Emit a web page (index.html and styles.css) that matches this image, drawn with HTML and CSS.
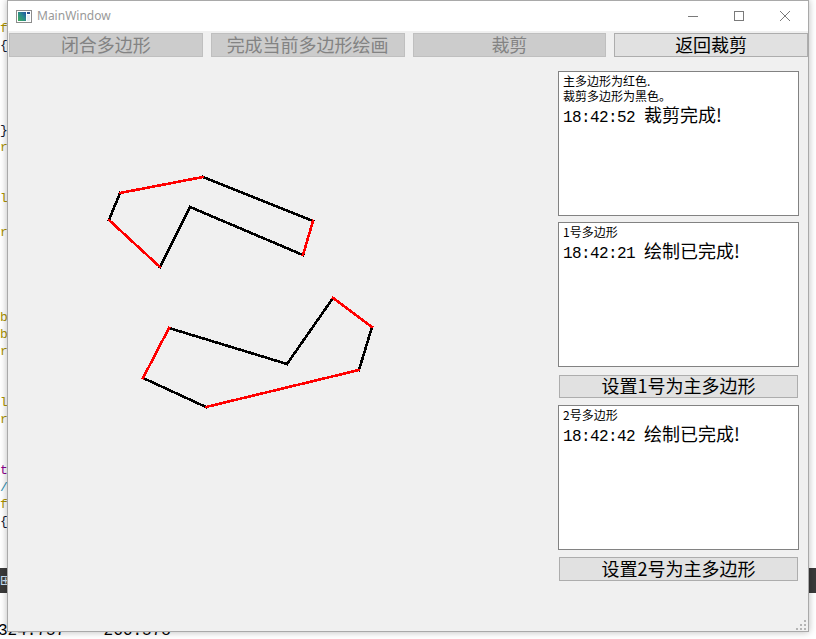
FILE: index.html
```html
<!DOCTYPE html>
<html>
<head>
<meta charset="utf-8">
<title>MainWindow</title>
<link rel="stylesheet" href="styles.css">
</head>
<body>
<div class="desktop">
  <div class="editor">
    <div class="ln kw">f</div>
    <div class="ln pn">{</div>
    <div class="ln"></div>
    <div class="ln"></div>
    <div class="ln"></div>
    <div class="ln"></div>
    <div class="ln pn">}</div>
    <div class="ln kw">r</div>
    <div class="ln"></div>
    <div class="ln"></div>
    <div class="ln kw">l</div>
    <div class="ln"></div>
    <div class="ln kw">r</div>
    <div class="ln"></div>
    <div class="ln"></div>
    <div class="ln"></div>
    <div class="ln"></div>
    <div class="ln kw">b</div>
    <div class="ln kw">b</div>
    <div class="ln kw">r</div>
    <div class="ln"></div>
    <div class="ln"></div>
    <div class="ln kw">l</div>
    <div class="ln kw">r</div>
    <div class="ln"></div>
    <div class="ln"></div>
    <div class="ln pu">t</div>
    <div class="ln cm">/</div>
    <div class="ln kw">f</div>
    <div class="ln pn">{</div>
  </div>
  <div class="taskbar">⊞</div>
  <div class="coords">324.757 -- 266.578</div>
</div>

<div class="window">
  <div class="titlebar">
    <svg class="appicon" width="16" height="13" viewBox="0 0 16 13">
      <defs>
        <linearGradient id="ig" x1="0" y1="1" x2="1" y2="0">
          <stop offset="0" stop-color="#3fae5a"/>
          <stop offset="0.55" stop-color="#2a8a8c"/>
          <stop offset="1" stop-color="#1f4fa8"/>
        </linearGradient>
      </defs>
      <rect x="0.5" y="0.5" width="15" height="12" fill="#ffffff" stroke="#8c8c8c"/>
      <rect x="2" y="2" width="8" height="9" fill="url(#ig)"/>
      <rect x="11" y="2" width="3" height="2" fill="#2b4f8a"/>
      <rect x="11" y="5" width="3" height="6" fill="#e8eef4"/>
    </svg>
    <span class="title">MainWindow</span>
    <div class="controls">
      <div class="ctl"><svg width="10" height="10" viewBox="0 0 10 10"><line x1="0" y1="5.5" x2="10" y2="5.5" stroke="#7a7a7a" stroke-width="1"/></svg></div>
      <div class="ctl"><svg width="10" height="10" viewBox="0 0 10 10"><rect x="0.5" y="0.5" width="9" height="9" fill="none" stroke="#7a7a7a" stroke-width="1"/></svg></div>
      <div class="ctl"><svg width="10" height="10" viewBox="0 0 10 10"><path d="M0 0L10 10M10 0L0 10" stroke="#7a7a7a" stroke-width="1"/></svg></div>
    </div>
  </div>

  <div class="client">
    <div class="toolbar">
      <button class="btn off">闭合多边形</button>
      <button class="btn off">完成当前多边形绘画</button>
      <button class="btn off">裁剪</button>
      <button class="btn">返回裁剪</button>
    </div>
    <div class="main">
      <div class="canvas">
        <svg width="550" height="574" viewBox="8 57 550 574" shape-rendering="crispEdges" stroke-width="2.6" stroke-linecap="square">
          <g stroke="#000000">
            <line x1="203" y1="177" x2="313" y2="221"/>
            <line x1="303" y1="255" x2="190" y2="207"/>
            <line x1="190" y1="207" x2="160" y2="267"/>
            <line x1="109" y1="220" x2="120" y2="193"/>
            <line x1="372" y1="327" x2="359" y2="370"/>
            <line x1="206" y1="407" x2="143" y2="378"/>
            <line x1="169" y1="328" x2="287" y2="364"/>
            <line x1="287" y1="364" x2="333" y2="298"/>
          </g>
          <g stroke="#ff0000">
            <line x1="120" y1="193" x2="203" y2="177"/>
            <line x1="313" y1="221" x2="303" y2="255"/>
            <line x1="160" y1="267" x2="109" y2="220"/>
            <line x1="333" y1="298" x2="372" y2="327"/>
            <line x1="359" y1="370" x2="206" y2="407"/>
            <line x1="143" y1="378" x2="169" y2="328"/>
          </g>
        </svg>
      </div>
      <div class="side">
        <div class="box">
          <div class="note">主多边形为红色.<br>裁剪多边形为黑色。</div>
          <div class="log"><span class="ts">18:42:52 </span>裁剪完成!</div>
        </div>
        <div class="box box2">
          <div class="note">1号多边形</div>
          <div class="log"><span class="ts">18:42:21 </span>绘制已完成!</div>
        </div>
        <button class="btn sbtn sbtn1">设置1号为主多边形</button>
        <div class="box box3">
          <div class="note">2号多边形</div>
          <div class="log"><span class="ts">18:42:42 </span>绘制已完成!</div>
        </div>
        <button class="btn sbtn sbtn2">设置2号为主多边形</button>
      </div>
    </div>
    <svg class="grip" width="10" height="10" viewBox="0 0 10 10" fill="#b4b4b4">
      <rect x="8" y="0" width="2" height="2"/>
      <rect x="4" y="4" width="2" height="2"/>
      <rect x="8" y="4" width="2" height="2"/>
      <rect x="0" y="8" width="2" height="2"/>
      <rect x="4" y="8" width="2" height="2"/>
      <rect x="8" y="8" width="2" height="2"/>
    </svg>
  </div>
</div>
</body>
</html>
```

FILE: styles.css
```css
* { box-sizing: border-box; }

body {
  margin: 0;
  width: 816px;
  height: 639px;
  overflow: hidden;
  position: relative;
  background: #ffffff;
  font-family: "Noto Sans CJK SC", sans-serif;
}

/* desktop behind the window */
.desktop {
  display: flex;
  flex-direction: column;
  height: 639px;
}
.editor {
  height: 574px;
  padding-top: 20px;
  font: 13px/17px "Liberation Mono", monospace;
}
.ln { height: 17px; white-space: pre; }
.kw { color: #a89000; }
.pn { color: #101830; }
.pu { color: #8a008a; }
.cm { color: #2f8fb0; }
.taskbar {
  height: 25px;
  background: #3a3a3a;
  color: #cfe2f3;
  font: 14px/25px "DejaVu Sans", sans-serif;
}
.coords {
  margin-top: 30px;
  margin-left: -2px;
  font: 16px/16px "Liberation Mono", monospace;
  color: #000;
  white-space: pre;
}

/* window */
.window {
  position: absolute;
  left: 7px;
  top: 0;
  width: 802px;
  height: 632px;
  border: 1px solid #a9a9a9;
  box-shadow: 0 0 7px rgba(0, 0, 0, 0.28);
  background: #f0f0f0;
  display: flex;
  flex-direction: column;
}
.titlebar {
  height: 30px;
  background: #ffffff;
  display: flex;
  align-items: center;
}
.appicon { margin-left: 8px; display: block; }
.title {
  margin-left: 5px;
  font: 12px/16px "Noto Sans", sans-serif;
  color: #999999;
}
.controls { margin-left: auto; display: flex; }
.ctl {
  width: 46px;
  height: 30px;
  display: flex;
  align-items: center;
  justify-content: center;
}
.ctl svg { display: block; }

.client {
  height: 600px;
  position: relative;
  display: flex;
  flex-direction: column;
}
.toolbar {
  display: flex;
  gap: 8px;
  padding: 2px 0 0 1px;
  height: 26px;
}
.btn {
  margin: 0;
  padding: 0 0 2px 0;
  height: 24px;
  background: #e1e1e1;
  border: 1px solid #adadad;
  color: #000000;
  font: 18px/20px "Noto Sans CJK SC", sans-serif;
  white-space: nowrap;
}
.toolbar .btn { flex: 1; }
.btn.off {
  background: #cccccc;
  border-color: #bfbfbf;
  color: #838383;
}

.main { display: flex; flex: 1; }
.canvas { width: 550px; }
.canvas svg { display: block; }
.side {
  width: 241px;
  display: flex;
  flex-direction: column;
  padding-top: 14px;
}
.box {
  height: 145px;
  background: #ffffff;
  border: 1px solid #828282;
  padding: 1px 4px;
  color: #000;
}
.box2 { margin-top: 6px; }
.box3 { margin-top: 7px; }
.note { font-size: 12px; line-height: 15px; white-space: nowrap; }
.log { font-size: 18px; line-height: 22px; white-space: nowrap; }
.ts {
  font-family: "Liberation Mono", monospace;
  font-size: 16px;
  letter-spacing: -0.6px;
}
.sbtn { margin-left: 1px; margin-right: 1px; }
.sbtn1 { margin-top: 8px; height: 23px; line-height: 19px; }
.sbtn2 { margin-top: 7px; height: 24px; }

.grip {
  position: absolute;
  right: 2px;
  bottom: 1px;
}
```
